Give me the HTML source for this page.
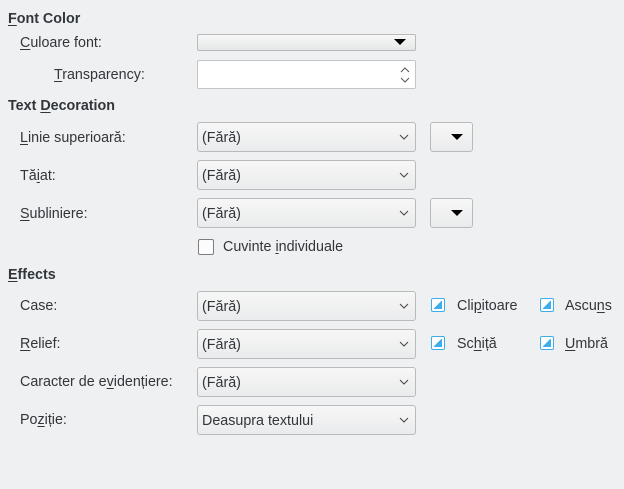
<!DOCTYPE html>
<html><head><meta charset="utf-8"><style>
body{margin:0;width:624px;height:489px;background:#eff0f1;font-family:"Liberation Sans","DejaVu Sans",sans-serif;font-size:14.3px;color:#31363b;position:relative;overflow:hidden}
.a{position:absolute;white-space:nowrap;line-height:16px}
.h{font-weight:bold}
u{text-decoration:underline;text-underline-offset:2px}
.cb{position:absolute;left:197px;width:217px;height:28px;border:1px solid #b9babb;border-radius:3px;background:linear-gradient(#f7f7f7,#eaebec);box-sizing:content-box}
.cb span{position:absolute;left:4px;top:7px;line-height:16px}
.cb svg{position:absolute;right:6px;top:10px}
.sb{position:absolute;left:430px;width:41px;height:28px;border:1px solid #b9babb;border-radius:3px;background:linear-gradient(#f7f7f7,#eaebec)}
.tri{position:absolute;left:20px;top:11px;width:0;height:0;border-left:6px solid transparent;border-right:6px solid transparent;border-top:6px solid #000}
.ck{position:absolute;width:12px;height:12px;border:1.5px solid #3daee9;border-radius:2px;background:#fff}
.ck:after{content:"";position:absolute;left:2px;top:2px;width:8px;height:8px;background:linear-gradient(135deg,transparent 45%,#3daee9 45%)}
</style></head><body>
<div class="a h" style="left:8px;top:11px"><u>F</u>ont Color</div>
<div class="a" style="left:20px;top:35px"><u>C</u>uloare font:</div>
<div style="position:absolute;left:197px;top:34px;width:217px;height:15px;border:1px solid #b9babb;border-radius:2px;background:linear-gradient(#f7f7f7,#e6e7e8)"><div style="position:absolute;right:9px;top:4px;border-left:6px solid transparent;border-right:6px solid transparent;border-top:6px solid #000"></div></div>
<div class="a" style="left:54px;top:67px"><u>T</u>ransparency:</div>
<div style="position:absolute;left:197px;top:60px;width:217px;height:27px;border:1px solid #c4c5c6;border-radius:2px;background:#fff">
<svg width="10" height="18" style="position:absolute;right:5px;top:5px"><path d="M1 6L5 2L9 6M1 12L5 16L9 12" fill="none" stroke="#555" stroke-width="1"/></svg></div>
<div class="a h" style="left:8px;top:98px">Text <u>D</u>ecoration</div>

<div class="a" style="left:20px;top:130px"><u>L</u>inie superioară:</div>
<div class="cb" style="top:122px"><span>(Fără)</span><svg width="10" height="8"><path d="M1 2L5 6L9 2" fill="none" stroke="#444"/></svg></div>
<div class="sb" style="top:122px"><div class="tri"></div></div>

<div class="a" style="left:20px;top:168px">Tă<u>i</u>at:</div>
<div class="cb" style="top:160px"><span>(Fără)</span><svg width="10" height="8"><path d="M1 2L5 6L9 2" fill="none" stroke="#444"/></svg></div>

<div class="a" style="left:20px;top:206px"><u>S</u>ubliniere:</div>
<div class="cb" style="top:198px"><span>(Fără)</span><svg width="10" height="8"><path d="M1 2L5 6L9 2" fill="none" stroke="#444"/></svg></div>
<div class="sb" style="top:198px"><div class="tri"></div></div>

<div style="position:absolute;left:198px;top:239px;width:14px;height:14px;border:1px solid #7a7c7e;border-radius:2px;background:#fcfcfc"></div>
<div class="a" style="left:223px;top:239px">Cuvinte <u>i</u>ndividuale</div>

<div class="a h" style="left:8px;top:267px"><u>E</u>ffects</div>

<div class="a" style="left:20px;top:298px">Case:</div>
<div class="cb" style="top:291px"><span>(Fără)</span><svg width="10" height="8"><path d="M1 2L5 6L9 2" fill="none" stroke="#444"/></svg></div>
<div class="ck" style="left:431px;top:298px"></div><div class="a" style="left:457px;top:298px">Cli<u>p</u>itoare</div>
<div class="ck" style="left:540px;top:298px"></div><div class="a" style="left:565px;top:298px">Ascu<u>n</u>s</div>

<div class="a" style="left:20px;top:336px"><u>R</u>elief:</div>
<div class="cb" style="top:329px"><span>(Fără)</span><svg width="10" height="8"><path d="M1 2L5 6L9 2" fill="none" stroke="#444"/></svg></div>
<div class="ck" style="left:431px;top:336px"></div><div class="a" style="left:457px;top:336px">Sc<u>h</u>iță</div>
<div class="ck" style="left:540px;top:336px"></div><div class="a" style="left:565px;top:336px"><u>U</u>mbră</div>

<div class="a" style="left:20px;top:374px">Caracter de e<u>v</u>idențiere:</div>
<div class="cb" style="top:367px"><span>(Fără)</span><svg width="10" height="8"><path d="M1 2L5 6L9 2" fill="none" stroke="#444"/></svg></div>

<div class="a" style="left:20px;top:412px">Po<u>z</u>iție:</div>
<div class="cb" style="top:405px"><span>Deasupra textului</span><svg width="10" height="8"><path d="M1 2L5 6L9 2" fill="none" stroke="#444"/></svg></div>
</body></html>
